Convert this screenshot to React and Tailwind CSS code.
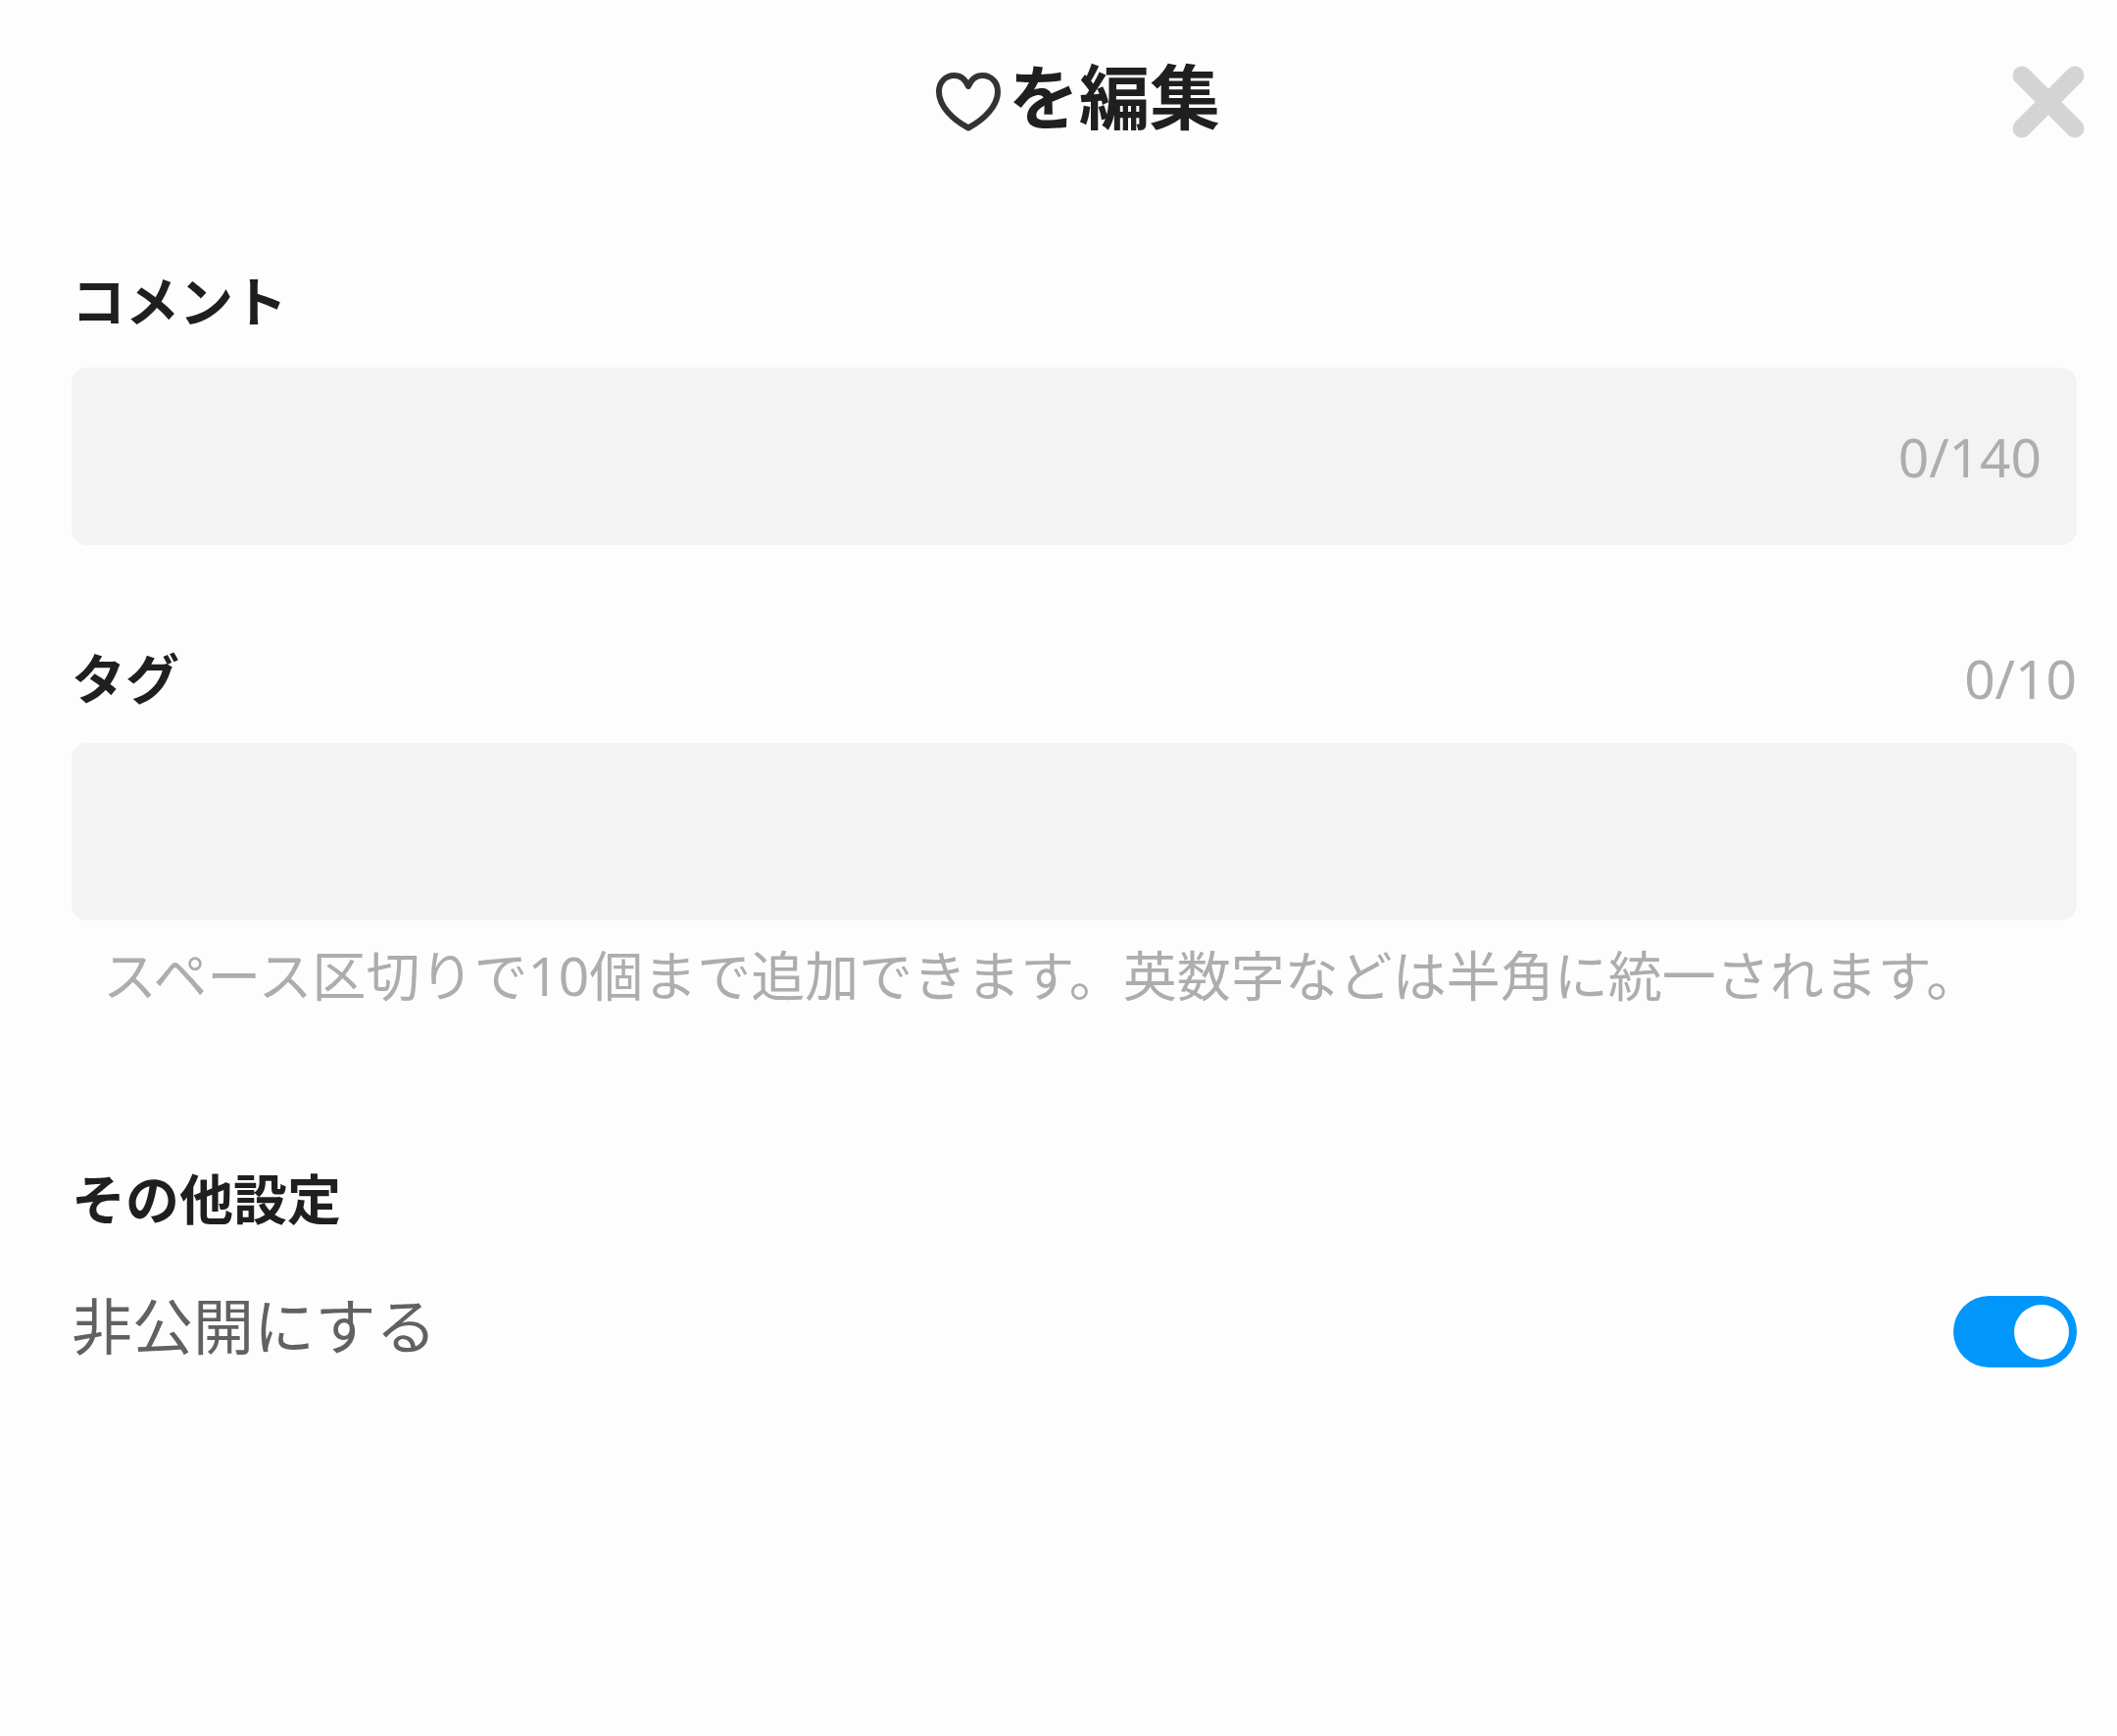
import { useState } from "react";

const labelClass = "text-[55px] leading-[72px] font-bold text-[#1f1f1f]";
const counterClass = "shrink-0 text-[55px] leading-[72px] text-[#adadad]";
const inputClass = "h-full w-full min-w-0 flex-1 bg-transparent text-[55px] text-[#1f1f1f] outline-none";
const boxClass = "flex h-[181px] items-center rounded-2xl bg-[#f3f3f3] px-9";

function HeartIcon() {
  return (
    <svg className="mt-3 h-[60px] w-[66px] shrink-0" viewBox="0 0 66 60" fill="none" aria-hidden="true">
      <path
        d="M33 14C30 7 24.500 3 18.500 3C9.500 3 3 10 3 19.500C3 34 17 48 33 56.500C49 48 63 34 63 19.500C63 10 56.500 3 47.500 3C41.500 3 36 7 33 14Z"
        stroke="#333333"
        strokeWidth="6"
        strokeLinejoin="round"
      />
    </svg>
  );
}

function CloseIcon() {
  return (
    <svg className="h-[74px] w-[74px]" viewBox="0 0 74 74" fill="none" aria-hidden="true">
      <path d="M10 10L64 64M64 10L10 64" stroke="#d4d4d4" strokeWidth="19" strokeLinecap="round" />
    </svg>
  );
}

export default function App() {
  const [comment, setComment] = useState("");
  const [tags, setTags] = useState("");
  const [hidden, setHidden] = useState(true);
  const tagCount = tags.split(/\s+/).filter(Boolean).length;

  return (
    <main
      lang="ja"
      className="min-h-screen bg-[#fdfdfd] pr-[41px] pl-[73px] font-['Noto_Sans','Noto_Sans_CJK_JP',sans-serif]"
    >
      <header className="relative flex h-[200px] items-start justify-center pt-14 pl-2">
        <h1 className="flex items-center gap-2 text-[72px] leading-[84px] font-bold text-[#1f1f1f]">
          <HeartIcon />
          <span>を編集</span>
        </h1>
        <button type="button" aria-label="閉じる" className="absolute top-[67px] -right-2">
          <CloseIcon />
        </button>
      </header>

      <form onSubmit={(e) => e.preventDefault()}>
        <section className="pt-[71px]">
          <label htmlFor="comment" className={labelClass}>
            コメント
          </label>
          <div className={boxClass + " mt-8"}>
            <input
              id="comment"
              type="text"
              maxLength={140}
              value={comment}
              onChange={(e) => setComment(e.target.value)}
              className={inputClass}
            />
            <span className={counterClass}>{comment.length}/140</span>
          </div>
        </section>

        <section className="pt-[100px]">
          <div className="flex items-center justify-between">
            <label htmlFor="tags" className={labelClass}>
              タグ
            </label>
            <span className={counterClass}>{tagCount}/10</span>
          </div>
          <div className={boxClass + " mt-[30px]"}>
            <input
              id="tags"
              type="text"
              aria-describedby="tags-hint"
              value={tags}
              onChange={(e) => setTags(e.target.value)}
              className={inputClass}
            />
          </div>
          <p id="tags-hint" className="mt-5 pl-8 text-[55px] leading-[72px] text-[#adadad]">
            スペース区切りで10個まで追加できます。英数字などは半角に統一されます。
          </p>
        </section>

        <section className="pt-[156px]">
          <h2 className={labelClass}>その他設定</h2>
          <div className="mt-14 flex items-end justify-between">
            <label htmlFor="private" className="pb-1 text-[62px] leading-[76px] text-[#616161]">
              非公開にする
            </label>
            <input
              id="private"
              type="checkbox"
              role="switch"
              checked={hidden}
              onChange={(e) => setHidden(e.target.checked)}
              className="flex h-[73px] w-[126px] appearance-none items-center rounded-full bg-[#c4c4c4] px-2 before:size-14 before:rounded-full before:bg-white checked:justify-end checked:bg-[#0096fa]"
            />
          </div>
        </section>
      </form>
    </main>
  );
}
